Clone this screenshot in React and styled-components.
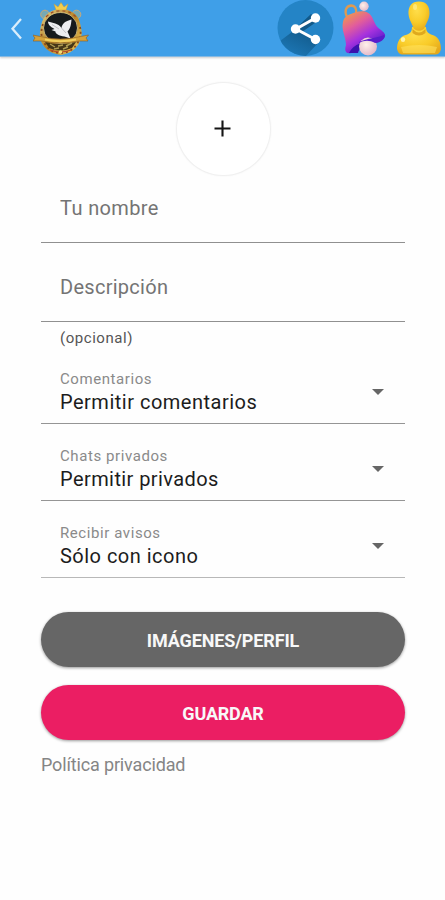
import React, { useState } from "react";
import styled, { createGlobalStyle } from "styled-components";

const GlobalStyle = createGlobalStyle`
  * {
    box-sizing: border-box;
  }
  body {
    margin: 0;
    background: #fefefe;
    font-family: Roboto, "Liberation Sans", sans-serif;
  }
`;

const Page = styled.div`
  width: 445px;
  min-height: 900px;
  background: #fefefe;
`;

const Header = styled.header`
  display: flex;
  align-items: center;
  height: 57px;
  background: #3f9fe8;
  border-bottom: 1px solid #86b9e2;
  box-shadow: 0 1px 2px rgba(0, 0, 0, 0.2);
`;

const IconButton = styled.button`
  display: block;
  flex: none;
  width: ${(p) => p.$width}px;
  height: 56px;
  padding: 0;
  border: 0;
  background: none;

  svg {
    display: block;
  }
`;

const Actions = styled.div`
  display: flex;
  gap: 6px;
  margin-left: auto;
`;

const Form = styled.form`
  display: flex;
  flex-direction: column;
  padding: 25px 40px 0 41px;
`;

const AddPhoto = styled.button`
  display: flex;
  align-items: center;
  justify-content: center;
  align-self: center;
  width: 95px;
  height: 94px;
  padding: 0;
  border: 1px solid #f0f0f0;
  border-radius: 50%;
  background: #fff;
  box-shadow: 0 0 2px rgba(0, 0, 0, 0.05);
`;

const TextInput = styled.input`
  width: 100%;
  height: ${(p) => p.$height}px;
  padding: ${(p) => p.$top}px 19px ${(p) => p.$bottom || 0}px;
  border: 0;
  border-bottom: 1px solid #909090;
  border-radius: 0;
  outline: none;
  background: transparent;
  font-family: inherit;
  font-size: 20px;
  letter-spacing: ${(p) => p.$spacing}px;
  color: #333;

  &::placeholder {
    color: #747474;
    opacity: 1;
  }
`;

const Hint = styled.span`
  height: 42px;
  padding: 6px 19px 0;
  font-size: 15px;
  line-height: 20px;
  letter-spacing: 0.55px;
  color: #555;
`;

const SelectRow = styled.div`
  display: flex;
  align-items: center;
  justify-content: space-between;
  height: ${(p) => p.$height}px;
  padding: 0 21px 0 19px;
  border-bottom: 1px solid ${(p) => p.$line || "#959595"};
`;

const SelectText = styled.div`
  display: flex;
  flex-direction: column;
  gap: 1px;
  align-self: flex-end;
  padding-bottom: 9px;
`;

const Label = styled.span`
  font-size: 15px;
  line-height: 20px;
  letter-spacing: 0.58px;
  color: #8a8a8a;
`;

const Value = styled.span`
  font-size: 20px;
  line-height: 24px;
  letter-spacing: ${(p) => p.$spacing}px;
  color: #1c1c1c;
`;

const Caret = styled.span`
  align-self: flex-end;
  width: 0;
  height: 0;
  margin-bottom: 28px;
  border-left: 6px solid transparent;
  border-right: 6px solid transparent;
  border-top: 6px solid #666;
`;

const Buttons = styled.div`
  display: flex;
  flex-direction: column;
  gap: 18px;
  padding-top: 34px;
`;

const Button = styled.button`
  height: 55px;
  padding: 1px 0 0;
  border: 0;
  border-radius: 28px;
  background: ${(p) => p.$color};
  box-shadow: 0 1px 3px rgba(0, 0, 0, 0.4);
  font-family: inherit;
  font-size: 18px;
  font-weight: 700;
  letter-spacing: ${(p) => p.$spacing}px;
  color: #f8f8f8;
`;

const Privacy = styled.a`
  margin-top: 14px;
  font-size: 18px;
  line-height: 22px;
  letter-spacing: -0.15px;
  color: #858585;
`;

const BackIcon = () => (
  <svg width="33" height="56" viewBox="0 0 33 56">
    <path d="M21 19L12.5 28.7L21 38.5" fill="none" stroke="#d9edfb" strokeWidth="2.3" />
  </svg>
);

const CrestIcon = () => (
  <svg width="58" height="56" viewBox="33 0 58 56">
    <defs>
      <linearGradient id="crestGold" x1="0" y1="0" x2="1" y2="1">
        <stop offset="0" stopColor="#e5cf82" />
        <stop offset="0.5" stopColor="#b88325" />
        <stop offset="1" stopColor="#edce60" />
      </linearGradient>
    </defs>
    <circle cx="45" cy="14.5" r="4.3" fill="#76a9b5" stroke="#c6a97a" />
    <circle cx="76.5" cy="14.5" r="4.3" fill="#76a9b5" stroke="#c6a97a" />
    <path d="M61 9C70 9 78 14 80 23C82 30 83 38 78 45C74 51 68 54 61 55C53 54 47 51 43 45C38 38 40 29 42 22C45 14 52 9 61 9Z" fill="url(#crestGold)" />
    <path d="M43 24Q39 35 45 44Q51 53 61 53Q71 53 77 44Q83 34 79 24" fill="none" stroke="#8a4a1e" strokeWidth="1.8" strokeDasharray="2 3" />
    <path d="M46 17Q53 10 61 11Q70 10 77 18" fill="none" stroke="#9c4c2d" strokeWidth="1.3" strokeDasharray="3 3" />
    <path d="M54 4L58 7L61 2.5L64 7L68 4L66 10H56Z" fill="#f3ce4c" stroke="#c89d3a" strokeWidth="0.5" />
    <ellipse cx="60.5" cy="28" rx="17" ry="15.5" fill="#171a1c" stroke="#e1c887" strokeWidth="0.8" />
    <path d="M48 21.5C53 23 58 23 61.5 28C62 24 65 21 71.5 19.5C71 26 70 29 67.5 31.5L70.5 38.5L64.5 36.5C59 36 55 33.5 55.5 31.5L51.5 30L54.5 29C50 26.5 48 24.5 48 21.5Z" fill="#ededf0" />
    <path d="M61.5 28L66 33M52 24.5L59 29" stroke="#b5b5ba" strokeWidth="0.8" />
    <path d="M32.5 35L43 37Q60 41 78 37L88.5 35L86 38L88 41L79 41Q60 45 42 41L33 41L35 38Z" fill="#d5a23a" stroke="#8c5b1e" strokeWidth="0.6" />
    <path d="M45 39.5Q60 43 76 39.5" fill="none" stroke="#f2cf5c" strokeWidth="2" />
    <path d="M45 42Q60 46 76 42L72 48Q60 53 49 48Z" fill="#453618" />
    <path d="M50 44L55 47M58 46L63 45M66 46L72 43M54 49L59 48M63 49L68 47" stroke="#b09c52" strokeWidth="1.4" />
    <path d="M50 50Q60 54 71 50" fill="none" stroke="#b94a2a" strokeWidth="1.2" />
    <circle cx="60.5" cy="52" r="1.8" fill="#f4dd75" />
  </svg>
);

const ShareIcon = () => (
  <svg width="57" height="56" viewBox="278 0 57 56">
    <defs>
      <clipPath id="shareClip">
        <circle cx="306.5" cy="28" r="28" />
      </clipPath>
      <linearGradient id="shareShade" x1="0.6" y1="0.3" x2="0.3" y2="1">
        <stop offset="0" stopColor="#115989" />
        <stop offset="1" stopColor="#1d78b7" />
      </linearGradient>
    </defs>
    <circle cx="306.5" cy="28" r="28" fill="#2484c6" />
    <g clipPath="url(#shareClip)">
      <path d="M319.5 20.5L303 32L320 42L306 57H288L281 41L293 32L312 14Z" fill="url(#shareShade)" />
    </g>
    <path d="M316.5 18L297 29L316.5 39.5" fill="none" stroke="#fff" strokeWidth="3" />
    <circle cx="316.5" cy="18" r="4.7" fill="#fff" />
    <circle cx="296.5" cy="29" r="4.7" fill="#fff" />
    <circle cx="316.5" cy="39.5" r="4.7" fill="#fff" />
  </svg>
);

const BellIcon = () => (
  <svg width="47" height="56" viewBox="341 0 47 56">
    <defs>
      <linearGradient id="bellBody" x1="0.1" y1="0.05" x2="0.65" y2="0.95">
        <stop offset="0" stopColor="#f09a4a" />
        <stop offset="0.32" stopColor="#e25d9b" />
        <stop offset="0.62" stopColor="#a732dd" />
        <stop offset="1" stopColor="#4919c8" />
      </linearGradient>
      <radialGradient id="bellBall" cx="0.4" cy="0.4" r="0.7">
        <stop offset="0" stopColor="#fff1ea" />
        <stop offset="1" stopColor="#dfb3c6" />
      </radialGradient>
    </defs>
    <path d="M348 17C345 11 347 6 352 5.5C356 5.5 358 9 357 14" fill="none" stroke="#df9a50" strokeWidth="2.3" />
    <circle cx="365" cy="6.3" r="4.7" fill="url(#bellBall)" />
    <path d="M344 22C345 16 350 14.5 356 12.5C363 10 370 11 373 17C376 23 377 27 382 30C386 33 388 36 384 39C378 44 360 45 352 53C347 54 345 51 347 45C347 37 342 30 344 22Z" fill="url(#bellBody)" />
    <path d="M350 53C354 44 366 41 380 38V42C368 44 360 47 359 53Z" fill="#3a12ad" />
    <circle cx="369" cy="46.5" r="9" fill="url(#bellBall)" />
    <path d="M360 42C368 38 379 38 385 35C387 39 381 43 376 43C371 40 365 40 360 43Z" fill="#5a1ccb" />
  </svg>
);

const UserIcon = () => (
  <svg width="50" height="56" viewBox="393 0 50 56">
    <defs>
      <radialGradient id="userGold" cx="0.4" cy="0.3" r="0.75">
        <stop offset="0" stopColor="#ffde4b" />
        <stop offset="0.55" stopColor="#f9cc29" />
        <stop offset="1" stopColor="#e5a91b" />
      </radialGradient>
    </defs>
    <path d="M412 27H426C426 33 430 34 434 35.5C439 38 441 43 441 49Q440 54 436 54.5H402Q398 54 397 49C397 43 399 38 404 35.5C409 34 412 33 412 27Z" fill="url(#userGold)" />
    <path d="M412.5 29Q419 36 425.5 29V33Q419 38 412.5 33Z" fill="#dfa91e" />
    <path d="M419 1.5C426 1.5 430 6 429.5 14C429 20 426 23 425 27C423 32 415 32 413 27C412 23 409 20 408.5 14C408 6 412 1.5 419 1.5Z" fill="url(#userGold)" />
    <path d="M401 47Q419 43 437 47L435 53H403Z" fill="#ffe15d" opacity="0.6" />
    <ellipse cx="403" cy="39.5" rx="2.2" ry="2.5" fill="#fff3a8" />
    <ellipse cx="415" cy="7" rx="2" ry="3" fill="#fff1a0" opacity="0.6" />
  </svg>
);

const PlusIcon = () => (
  <svg width="18" height="18" viewBox="0 0 18 18">
    <path d="M8.5 0.5V16.5M0.5 8.5H16.5" stroke="#151515" strokeWidth="2.1" />
  </svg>
);

const selects = [
  { label: "Comentarios", value: "Permitir comentarios", height: 60, spacing: 0.5 },
  { label: "Chats privados", value: "Permitir privados", height: 77, spacing: 0.42 },
  { label: "Recibir avisos", value: "Sólo con icono", height: 77, spacing: 0.48, line: "#b8b8b8" },
];

export default function App() {
  const [formValue, setFormValue] = useState({ nombre: "", descripcion: "" });

  const handleChange = (e) => {
    const { name, value } = e.target;
    setFormValue({ ...formValue, [name]: value });
  };

  return (
    <Page>
      <GlobalStyle />
      <Header>
        <IconButton $width={33} aria-label="Volver">
          <BackIcon />
        </IconButton>
        <CrestIcon />
        <Actions>
          <IconButton $width={57} aria-label="Compartir">
            <ShareIcon />
          </IconButton>
          <IconButton $width={47} aria-label="Avisos">
            <BellIcon />
          </IconButton>
          <IconButton $width={52} aria-label="Perfil">
            <UserIcon />
          </IconButton>
        </Actions>
      </Header>

      <Form onSubmit={(e) => e.preventDefault()}>
        <AddPhoto type="button" aria-label="Añadir foto">
          <PlusIcon />
        </AddPhoto>
        <TextInput
          name="nombre"
          placeholder="Tu nombre"
          value={formValue.nombre}
          onChange={handleChange}
          $height={67}
          $top={0}
          $bottom={2}
          $spacing={0.38}
        />
        <TextInput
          name="descripcion"
          placeholder="Descripción"
          value={formValue.descripcion}
          onChange={handleChange}
          $height={79}
          $top={10}
          $spacing={0.28}
        />
        <Hint>(opcional)</Hint>

        {selects.map((item) => (
          <SelectRow key={item.label} $height={item.height} $line={item.line}>
            <SelectText>
              <Label>{item.label}</Label>
              <Value $spacing={item.spacing}>{item.value}</Value>
            </SelectText>
            <Caret />
          </SelectRow>
        ))}

        <Buttons>
          <Button type="button" $color="#666" $spacing={-0.13}>
            IMÁGENES/PERFIL
          </Button>
          <Button type="submit" $color="#eb1e63" $spacing={-0.2}>
            GUARDAR
          </Button>
        </Buttons>
        <Privacy>Política privacidad</Privacy>
      </Form>
    </Page>
  );
}
